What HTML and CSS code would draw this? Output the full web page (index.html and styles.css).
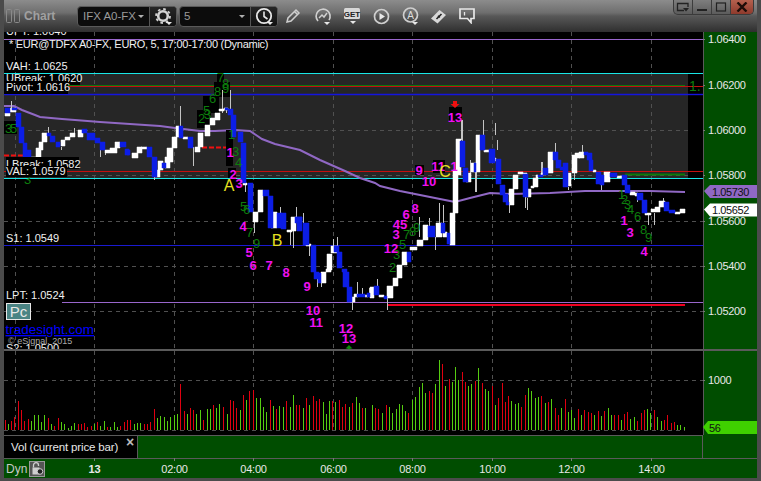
FILE: index.html
```html
<!DOCTYPE html>
<html lang="en">
<head>
<meta charset="utf-8">
<title>Chart</title>
<link rel="stylesheet" href="styles.css">
</head>
<body>
<div class="window">
  <header class="titlebar">
    <div class="brand">
      <svg class="brand-icon" width="15" height="15" viewBox="0 0 15 15"><rect x="0.5" y="0.5" width="5" height="13" rx="1"/><rect x="8.5" y="0.5" width="5" height="13" rx="1"/></svg>
      <span class="brand-name">Chart</span>
    </div>
    <div class="combo combo-symbol">
      <span class="combo-text">IFX A0-FX</span><span class="caret"></span>
      <span class="combo-btn">
        <svg width="18" height="18" viewBox="0 0 18 18"><circle class="ic-s" cx="9" cy="9" r="4.8" stroke-width="2.6"/><circle class="ic-s" cx="9" cy="9" r="7" stroke-width="1.8" stroke-dasharray="2.6 2.9"/><path class="ic-f" d="M12 15h6l-3 3z"/></svg>
      </span>
    </div>
    <div class="combo combo-interval">
      <span class="combo-text">5</span><span class="caret"></span>
      <span class="combo-btn">
        <svg width="18" height="18" viewBox="0 0 18 18"><circle class="ic-w" cx="9" cy="9" r="7.2" stroke-width="1.8"/><path class="ic-w" d="M9 4.5V9.5L12.5 12" stroke-width="1.6"/><path class="ic-f" d="M12 15h6l-3 3z"/></svg>
      </span>
    </div>
    <div class="tools">
      <svg class="tool t-pencil" width="16" height="16" viewBox="0 0 16 16"><path class="ic-g" d="M2 14l1-4 8-8 3 3-8 8zM9.500 3.500l3 3" stroke-width="1.5"/></svg>
      <svg class="tool t-chart" width="18" height="18" viewBox="0 0 18 18"><path class="ic-g" d="M4 14A7 7 0 1 1 15 13" stroke-width="1.7"/><path class="ic-g" d="M5 11l3-3 2 2 3-4" stroke-width="1.5"/><path class="ic-f" d="M10 15h6l-3 3z"/></svg>
      <svg class="tool t-get" width="18" height="18" viewBox="0 0 18 18"><rect class="get-box" x="0" y="1" width="16" height="11" rx="1.500"/><text class="get-text" x="8" y="9.500">GET</text><path class="ic-f" d="M6 14h6l-3 3z"/></svg>
      <svg class="tool t-play" width="17" height="17" viewBox="0 0 17 17"><circle class="ic-g" cx="8.500" cy="8.500" r="7" stroke-width="1.7"/><path class="ic-f" d="M6.500 5l5.500 3.500-5.500 3.500z"/></svg>
      <svg class="tool t-auto" width="18" height="18" viewBox="0 0 18 18"><circle class="ic-g" cx="8.500" cy="8" r="7" stroke-width="1.7"/><text class="auto-text" x="8.500" y="11.500">A</text><path class="ic-f" d="M10 15h6l-3 3z"/></svg>
      <svg class="tool t-diamond" width="17" height="15" viewBox="0 0 17 15"><path class="ic-sf" d="M1 9.500L9.500 1 16 6 7.500 14.500z"/><path class="ic-d" d="M6.500 10l5-5M9.800 8.500l-1.800-1.800" stroke-width="1.600"/></svg>
      <svg class="tool t-note" width="17" height="16" viewBox="0 0 17 16"><path class="ic-w" d="M1 1h14v9.500h-3v4l-3.500-4H1z" stroke-width="1.700"/><path class="ic-w" d="M5.500 4v3.500" stroke-width="1.300"/></svg>
    </div>
    <div class="winctl">
      <span class="wbtn"><svg width="14" height="11" viewBox="0 0 14 11"><path class="ic-w2" d="M8 8.500H1.500V1.500H12V5" stroke-width="1.300"/><path class="ic-f2" d="M7 6h6l-3 3.500z"/></svg></span>
      <span class="wbtn"><svg width="12" height="10" viewBox="0 0 12 10"><path class="ic-f2" d="M1 7h10v2H1z"/></svg></span>
      <span class="wbtn"><svg width="12" height="10" viewBox="0 0 12 10"><rect class="ic-w2" x="1.500" y="1" width="9" height="8" stroke-width="1.200"/></svg></span>
      <span class="wbtn wclose"><svg width="12" height="10" viewBox="0 0 12 10"><path class="ic-x" d="M1.500 0.500l9 9M10.500 0.500l-9 9" stroke-width="2.400"/></svg></span>
    </div>
  </header>

  <section class="pane-price">
    <svg class="plot" width="699" height="317" viewBox="4 32 699 317">
      <rect class="band" x="4" y="74" width="684" height="104"/>
      <path class="grid" d="M15 32V349M94 32V349M174 32V349M253 32V349M333 32V349M412 32V349M492 32V349M571 32V349M651 32V349M4 130H703M4 175H703M4 221H703M4 266H703M4 311H703"/>
      <path class="l-purple" d="M4 39.500H703"/>
      <path class="l-green" d="M4 85H685"/>
      <path class="l-red" d="M4 86H703M4 171.500H703"/>
      <path class="l-blue" d="M4 94.500H703"/>
      <path class="l-blue-thin" d="M4 245.500H703"/>
      <path class="l-purple" d="M62 302.500H703"/>
      <path class="l-thick-red" d="M388 305H685"/>
      <path class="l-thick-green" d="M625 174.500H685"/>
      <path class="l-dash-red" d="M4 155.500H26M202 147.500H228"/>
      <rect class="bg-black" x="688" y="74" width="15" height="104"/>
      <path class="l-cyan" d="M4 73.500H703M4 178.500H703"/>
      <path class="l-red" d="M685 86H703M688 171.500H703"/>
      <path class="l-blue" d="M688 94.500H703"/>
      <path class="ma" d="M4 106L14 106L22 110L35 115L40 117L62 119L75 120L100 122L130 124L160 126L175 128L200 131L215 131L235 130L250 131L262 139L275 144L300 150L320 160L345 171L360 178L375 183L380 186L400 191L430 197L450 201L455 202L470 198L490 193L510 194L550 193L585 191L650 191L685 192"/>

      <rect class="bg-black" x="4" y="121" width="13" height="13"/>
      <rect class="bg-black" x="197" y="110" width="14" height="18"/>
      <rect class="bg-black" x="203" y="96" width="16" height="17"/>
      <rect class="bg-black" x="214" y="82" width="16" height="15"/>
      <rect class="bg-black" x="217" y="74" width="7" height="9"/>
      <rect class="bg-black" x="226" y="130" width="7" height="36"/>
      <rect class="bg-black" x="228" y="168" width="8" height="10"/>
      <rect class="bg-black" x="449" y="107" width="13" height="15"/>
      <rect class="bg-black" x="415" y="165" width="9" height="10"/>
      <rect class="bg-black" x="433" y="160" width="12" height="13"/>

      <path class="wick" d="M11 101V108M48 127V133M74 128V134M61 147V150M100 150V157M105 150V155M193 147V166M154 172V180M180 106V126M222 90V113M230 90V113M226 108V113M462 120V141M476 172V192M483 120V135M439 203V225M443 205V223M419 217V237M429 218V226M435 237V250M470 160V173M475 172V192M525 197V208M541 162V175M548 162V170M555 143V153M582 145V153M542 162V173M663 198V201M648 215V225M654 213V225M637 195V202M509 205V213M527 198V210M280 207V213M290 232V245M293 227V248M296 207V217M303 213V223M309 245V256M333 239V247M337 237V246M317 279V287M321 283V287M352 302V310M357 282V295M362 288V295M369 288V295M377 279V287M387 298V310M243 166V180M245 183V192M254 222V233M461 120V140M495 123V135M497 140V150M574 170V180M568 187V190M601 184V190"/>

      <path class="body-w" d="M5 113h5v3h-5zM10 108h6v4h-6zM31 157h6v2h-6zM36 148h5v9h-5zM39 142h4v8h-4zM42 133h5v9h-5zM61 140h4v6h-4zM65 137h5v3h-5zM70 133h5v4h-5zM78 130h5v7h-5zM105 150h5v3h-5zM110 148h7v5h-7zM115 142h5v6h-5zM132 153h6v5h-6zM137 147h5v6h-5zM141 147h6v2h-6zM155 170h5v7h-5zM158 161h5v9h-5zM165 157h5v11h-5zM167 148h6v14h-6zM172 137h5v11h-5zM176 126h3v11h-3zM183 137h5v2h-5zM195 147h5v5h-5zM198 133h5v14h-5zM205 125h5v11h-5zM210 118h5v7h-5zM215 113h5v7h-5zM219 109h5v2h-5zM224 108h4v2h-4zM243 183h4v2h-4zM253 212h5v10h-5zM258 190h5v22h-5zM271 212h6v16h-6zM287 230h5v2h-5zM291 217h5v14h-5zM306 244h5v2h-5zM321 272h5v11h-5zM326 269h5v3h-5zM327 254h5v16h-5zM331 246h6v7h-6zM350 297h5v5h-5zM354 294h4v3h-4zM365 295h3v2h-3zM370 287h4v11h-4zM379 295h5v2h-5zM387 286h6v12h-6zM393 278h5v8h-5zM397 265h5v13h-5zM402 252h5v13h-5zM410 247h7v3h-7zM417 240h6v6h-6zM423 225h5v15h-5zM436 223h6v14h-6zM443 232h4v5h-4zM450 213h5v32h-5zM453 170h5v43h-5zM456 139h5v36h-5zM466 173h5v9h-5zM471 163h5v9h-5zM476 135h4v37h-4zM484 150h6v2h-6zM493 158h3v3h-3zM509 189h5v16h-5zM513 175h5v14h-5zM518 172h5v2h-5zM526 189h5v8h-5zM531 186h3v2h-3zM533 178h5v9h-5zM536 175h2v3h-2zM523 173h4v1h-4zM541 173h5v2h-5zM548 152h5v21h-5zM566 173h5v13h-5zM572 155h5v18h-5zM575 153h5v5h-5zM579 152h5v6h-5zM593 170h3v2h-3zM604 172h6v10h-6zM617 176h5v2h-5zM630 192h5v3h-5zM635 193h3v3h-3zM645 213h6v2h-6zM651 209h4v3h-4zM655 207h5v5h-5zM659 201h6v6h-6zM675 212h5v2h-5zM680 209h5v4h-5z"/>
      <path class="body-b" d="M5 108h5v5h-5zM12 108h5v2h-5zM16 113h5v14h-5zM19 127h5v16h-5zM23 143h4v14h-4zM27 150h4v8h-4zM47 133h4v3h-4zM50 136h5v6h-5zM56 142h4v5h-4zM82 129h5v4h-5zM87 133h8v7h-8zM95 138h5v5h-5zM100 142h5v8h-5zM120 142h6v5h-6zM125 149h4v6h-4zM127 150h3v5h-3zM147 147h5v10h-5zM152 157h5v20h-5zM162 163h4v5h-4zM179 126h4v12h-4zM188 137h5v11h-5zM225 108h3v2h-3zM228 109h5v6h-5zM231 115h5v22h-5zM238 132h5v10h-5zM241 143h5v40h-5zM248 183h5v29h-5zM263 190h6v6h-6zM268 196h5v32h-5zM277 213h5v15h-5zM281 213h5v16h-5zM295 217h7v6h-7zM297 217h5v14h-5zM303 223h6v22h-6zM311 245h5v27h-5zM314 272h5v7h-5zM318 273h3v10h-3zM334 246h5v6h-5zM337 252h5v16h-5zM342 269h5v3h-5zM343 272h6v15h-6zM347 287h5v15h-5zM357 294h8v3h-8zM367 293h3v4h-3zM374 286h5v9h-5zM384 296h3v3h-3zM407 252h4v10h-4zM428 226h7v11h-7zM441 223h4v10h-4zM447 233h3v11h-3zM460 141h5v26h-5zM463 168h5v14h-5zM474 163h2v9h-2zM480 135h5v15h-5zM489 149h6v14h-6zM496 159h5v25h-5zM500 185h5v10h-5zM503 194h5v8h-5zM506 202h3v3h-3zM523 174h5v23h-5zM538 175h5v2h-5zM543 168h5v7h-5zM553 152h5v8h-5zM556 160h5v8h-5zM560 167h3v3h-3zM563 163h5v24h-5zM584 152h4v3h-4zM587 153h5v7h-5zM589 160h4v11h-4zM596 172h5v12h-5zM600 175h4v10h-4zM610 173h7v4h-7zM622 175h5v10h-5zM625 185h5v8h-5zM637 193h6v7h-6zM642 200h5v13h-5zM664 202h5v9h-5zM669 210h6v3h-6z"/>

      <g class="green-digits">
        <text x="217" y="82">7</text><text x="222" y="88">8</text><text x="222" y="93">9</text><text x="214" y="96">8</text><text x="209" y="103">6</text><text x="203" y="115">5</text><text x="198" y="123">2</text><text x="204" y="119">3</text><text x="5" y="133">3</text><text x="10" y="133">5</text><text x="24" y="184">3</text><text x="232" y="156">3</text><text x="235" y="167">4</text><text x="228" y="139">1</text><text x="240" y="211">5</text><text x="243" y="214">6</text><text x="246" y="237">7</text><text x="253" y="248">9</text><text x="389" y="272">2</text><text x="393" y="259">3</text><text x="399" y="249">5</text><text x="403" y="239">7</text><text x="409" y="236">8</text><text x="413" y="232">9</text><text x="618" y="199">1</text><text x="621" y="204">2</text><text x="624" y="209">3</text><text x="627" y="214">4</text><text x="634" y="221">6</text><text x="640" y="234">8</text><text x="645" y="242">9</text>
        <text class="edge-digit" x="689" y="91">1.</text>
      </g>
      <g class="magenta-digits">
        <text x="455" y="122">13</text><text x="419" y="175">9</text><text x="429" y="186">10</text><text x="438" y="171">11</text><text x="454" y="171">1</text><text x="230" y="157">1</text><text x="233" y="179">2</text><text x="239" y="188">3</text><text x="243" y="231">4</text><text x="249" y="257">5</text><text x="253" y="270">6</text><text x="269" y="270">7</text><text x="286" y="277">8</text><text x="307" y="291">9</text><text x="313" y="315">10</text><text x="316" y="327">11</text><text x="346" y="333">12</text><text x="349" y="343">13</text><text x="391" y="253">12</text><text x="396" y="239">3</text><text x="400" y="229">45</text><text x="406" y="219">6</text><text x="415" y="213">8</text><text x="624" y="225">1</text><text x="630" y="237">3</text><text x="644" y="256">4</text>
      </g>
      <path class="arrow-red" d="M453 101h4v3h2.500l-4.500 4-4.500-4h2.500z"/>
      <path class="arrow-green" d="M349 345l3.500 3.500h-2v.5h-3v-.5h-2z"/>
      <text class="yellow" x="229" y="191">A</text>
      <text class="yellow" x="277" y="246">B</text>
      <text class="yellow" x="445" y="177">C</text>

      <g class="labels">
        <text x="6" y="35">UPT: 1.0640</text>
        <text class="title-line" x="9" y="48">* EUR@TDFX A0-FX, EURO, 5, 17:00-17:00 (Dynamic)</text>
        <text x="6" y="70">VAH: 1.0625</text>
        <rect class="bg-black" x="4" y="74" width="76" height="11"/>
        <text x="6" y="82">UBreak: 1.0620</text>
        <rect class="bg-black" x="4" y="81" width="64" height="13"/>
        <text x="6" y="91">Pivot: 1.0616</text>
        <rect class="bg-black" x="6" y="157" width="73" height="12"/>
        <text x="6" y="168">LBreak: 1.0582</text>
        <rect class="bg-black" x="6" y="166" width="61" height="11"/>
        <text x="6" y="175">VAL: 1.0579</text>
        <text x="6" y="242">S1: 1.0549</text>
        <text x="6" y="299">LPT: 1.0524</text>
        <text x="6" y="352">S2: 1.0500</text>
      </g>
      <rect class="pc-box" x="6.500" y="303.500" width="24" height="16"/>
      <text class="pc-text" x="18.500" y="316.500">Pc</text>
      <text class="link" x="5.500" y="334">tradesight.com</text>
      <text class="copy" x="8" y="344">© eSignal, 2015</text>
    </svg>
    <svg class="axis" width="54" height="317" viewBox="703 32 54 317">
      <path class="axis-line" d="M703.500 32V349"/>
      <path class="axis-tick" d="M703 39.500h2M703 85.500h2M703 130.500h2M703 175.500h2M703 221.500h2M703 266.500h2M703 311.500h2"/>
      <g class="axis-text">
        <text x="708" y="43">1.06400</text><text x="708" y="89">1.06200</text><text x="708" y="134">1.06000</text><text x="708" y="179">1.05800</text><text x="708" y="225">1.05600</text><text x="708" y="270">1.05400</text><text x="708" y="315">1.05200</text>
      </g>
      <path class="tag-purple" d="M704 191l6-6h47v13h-47z"/>
      <text class="tag-text" x="712" y="195.500">1.05730</text>
      <path class="tag-white" d="M704 209.500l6-6h47v13h-47z"/>
      <text class="tag-text" x="712" y="213.500">1.05652</text>
    </svg>
  </section>

  <div class="sep"></div>

  <section class="pane-vol">
    <svg class="plot" width="699" height="84" viewBox="4 351 699 84">
      <path class="grid" d="M15 351V431M94 351V431M174 351V431M253 351V431M333 351V431M412 351V431M492 351V431M571 351V431M651 351V431M4 380.500H703M4 430.500H685"/>
      <g transform="translate(0 360) scale(.33333)">
        <path class="vol-r" d="M16 180V211M34 183V211M45 172V211M55 123V211M64 150V211M75 183V211M85 178V211M145 175V211M164 198V211M175 174V211M235 192V211M244 193V211M254 189V211M263 200V211M274 198V211M292 186V211M322 201V211M363 198V211M373 187V211M383 181V211M393 181V211M433 192V211M442 192V211M451 186V211M463 147V211M541 72V211M553 153V211M572 144V211M581 150V211M610 180V211M640 135V211M670 141V211M691 120V211M700 123V211M711 144V211M731 105V211M750 93V211M760 90V211M811 120V211M829 147V211M859 123V211M889 135V211M899 135V211M919 114V211M940 108V211M949 123V211M958 117V211M999 123V211M1018 120V211M1028 141V211M1038 132V211M1058 129V211M1088 144V211M1128 144V211M1137 147V211"/>
        <path class="vol-g" d="M25 192V211M94 183V211M103 165V211M115 165V211M125 185V211M134 165V211M154 192V211M184 187V211M195 193V211M205 204V211M214 198V211M223 189V211M283 191V211M303 198V211M313 183V211M333 201V211M343 186V211M352 201V211M403 192V211M412 189V211M421 189V211M472 174V211M481 168V211M494 171V211M503 183V211M512 171V211M523 165V211M532 162V211M562 162V211M591 162V211M601 150V211M622 147V211M631 147V211M650 144V211M660 132V211M682 162V211M721 150V211M741 120V211M769 114V211M781 114V211M790 141V211M800 156V211M820 138V211M840 138V211M850 141V211M871 141V211M881 105V211M910 144V211M929 135V211M970 126V211M980 162V211M989 123V211M1008 126V211M1048 141V211M1069 111V211M1079 129V211M1098 144V211M1117 135V211"/>
      </g>
      <g transform="translate(380 360) scale(.33333)">
        <path class="vol-r" d="M19 135V211M87 159V211M148 93V211M157 99V211M187 12V211M208 57V211M247 36V211M256 66V211M286 63V211M307 69V211M337 78V211M355 114V211M367 69V211M376 126V211M385 108V211M424 141V211M436 105V211M484 108V211M505 126V211M526 144V211M535 165V211M556 117V211M595 147V211M614 150V211M626 156V211M634 159V211M655 153V211M674 153V211M704 165V211M715 165V211M734 162V211M743 156V211M772 183V211M784 159V211M793 150V211M823 150V211M853 180V211M862 165V211M875 189V211M883 186V211"/>
        <path class="vol-g" d="M7 159V211M28 141V211M38 159V211M49 147V211M58 132V211M68 135V211M77 153V211M98 120V211M107 111V211M118 81V211M128 69V211M137 99V211M167 72V211M179 0V211M196 78V211M217 66V211M226 21V211M236 60V211M265 78V211M276 72V211M296 24V211M316 87V211M326 93V211M346 135V211M395 123V211M406 132V211M415 129V211M445 84V211M454 93V211M466 114V211M475 111V211M496 129V211M514 117V211M544 144V211M565 156V211M574 150V211M584 174V211M604 165V211M643 165V211M664 168V211M685 144V211M694 165V211M724 180V211M753 177V211M763 171V211M802 147V211M813 159V211M832 171V211M844 183V211M892 195V211M902 195V211M913 201V211"/>
      </g>
    </svg>
    <svg class="axis" width="54" height="84" viewBox="703 351 54 84">
      <path class="axis-line" d="M703.500 351V435"/>
      <path class="axis-tick" d="M703 380.500h2"/>
      <text class="axis-text" x="708" y="384">1000</text>
      <path class="tag-green" d="M703 427l5-6h49v13h-49z"/>
      <text class="tag-text" x="709" y="431.500">56</text>
    </svg>
  </section>

  <section class="tabs">
    <div class="tab">
      <span class="tab-label">Vol (current price bar)</span>
      <span class="tab-close">×</span>
    </div>
    <div class="tab-fill"></div>
  </section>

  <footer class="timeline">
    <span class="dyn">Dyn</span>
    <span class="lock">
      <svg width="13" height="13" viewBox="0 0 13 13"><rect class="lock-body" x="1.500" y="5.500" width="7" height="7"/><path class="lock-arc" d="M2.500 5.500V3.200a2.500 2.500 0 0 1 5 0V4" stroke-width="1.300"/><circle class="lock-dot" cx="9" cy="9.500" r="2.800"/></svg>
    </span>
    <svg class="times" width="712" height="20" viewBox="46 458 712 20">
      <path class="axis-tick" d="M94.500 458v3M174.500 458v3M253.500 458v3M333.500 458v3M412.500 458v3M492.500 458v3M571.500 458v3M651.500 458v3"/>
      <g class="time-text">
        <text class="time-bold" x="94.500" y="473">13</text>
        <text x="174.500" y="473">02:00</text><text x="253.500" y="473">04:00</text><text x="333.500" y="473">06:00</text><text x="412.500" y="473">08:00</text><text x="492.500" y="473">10:00</text><text x="571.500" y="473">12:00</text><text x="651.500" y="473">14:00</text>
      </g>
    </svg>
  </footer>
</div>
</body>
</html>
```

FILE: styles.css
```css
* { box-sizing: border-box; }
html, body { margin: 0; padding: 0; background: #444; }
body { font-family: "Liberation Sans", Arial, sans-serif; }
svg { display: block; flex: none; }

.window {
  width: 761px; height: 481px; overflow: hidden;
  background: #4b4b4b;
  border-right: 4px solid #4b4b4b;
  border-left: 4px solid #4b4b4b;
  border-bottom: 3px solid #4b4b4b;
  display: flex; flex-direction: column;
}

/* title bar */
.titlebar {
  height: 32px; margin: 0 -4px; padding: 0 0 0 6px; flex: none;
  background: linear-gradient(#8c8c8c 0, #6e6e6e 40%, #585858 50%, #2f2f2f 100%);
  display: flex; align-items: center; position: relative;
}
.brand { display: flex; align-items: center; gap: 3px; width: 71px; }
.brand-icon rect { fill: none; stroke: #8a8a8a; }
.brand-name { font-size: 12px; font-weight: bold; color: #a0a0a0; }
.combo {
  height: 21px; display: flex; align-items: center; position: relative;
  background: #0c0c0c; border: 1px solid #5a5a5a; border-radius: 4px;
}
.combo-symbol { width: 100px; margin-right: 2px; }
.combo-interval { width: 99px; }
.combo-text { font-size: 11.5px; color: #9a9a9a; padding-left: 4px; flex: 1; white-space: nowrap; overflow: hidden; }
.combo-symbol .combo-text { padding-left: 5px; }
.caret { width: 0; height: 0; border: 3px solid transparent; border-top: 3px solid #b0b0b0; border-bottom: 0; margin-right: 5px; flex: none; }
.combo-btn {
  width: 27px; height: 19px; border-left: 1px solid #555; flex: none;
  display: flex; align-items: center; justify-content: center;
  background: linear-gradient(#262626, #111); border-radius: 0 3px 3px 0;
}
.tools { display: flex; align-items: center; }
.t-pencil { margin: 0 0 0 7px; }
.t-chart { margin-left: 13px; }
.t-get { margin-left: 12px; }
.t-play { margin-left: 11px; }
.t-auto { margin-left: 12px; }
.t-diamond { margin-left: 10px; }
.t-note { margin-left: 12px; }
.ic-w { fill: none; stroke: #e8e8e8; }
.ic-s { fill: none; stroke: #d4d4d4; }
.ic-g { fill: none; stroke: #cfcfcf; }
.ic-f { fill: #e8e8e8; }
.ic-sf { fill: #d8d8d8; }
.ic-d { fill: none; stroke: #222; }
.get-box { fill: #d8d8d8; }
.get-text { font: bold 8px "Liberation Sans", sans-serif; fill: #222; text-anchor: middle; }
.auto-text { font: 10px "Liberation Sans", sans-serif; fill: #ddd; text-anchor: middle; }

.winctl {
  position: absolute; top: 0; left: 673px; width: 81px; height: 15px;
  display: flex; border: 1px solid #3a3a3a; border-top: 0; border-radius: 0 0 5px 5px; overflow: hidden;
  background: linear-gradient(#7e7e7e, #5c5c5c);
}
.wbtn { flex: 1; display: flex; align-items: center; justify-content: center; border-left: 1px solid #3d3d3d; }
.wbtn:first-child { border-left: 0; }
.wclose { flex: 1.2; background: linear-gradient(#b4604e, #8e3a2c); }
.ic-w2 { fill: none; stroke: #222; }
.ic-f2 { fill: #222; }
.ic-x { fill: none; stroke: #1c0c08; }

/* panes */
.pane-price { display: flex; height: 317px; flex: none; background: #000; }
.pane-vol { display: flex; height: 84px; flex: none; background: #000; }
.sep { height: 2px; background: #5a5a5a; flex: none; }
.axis { background: #004d00; }
.axis-line { stroke: #5a5a5a; stroke-width: 1; }
.axis-tick { stroke: #777; stroke-width: 1; fill: none; }
.axis-text, .axis-text text { font: 11px "Liberation Sans", sans-serif; fill: #e8e8e8; letter-spacing: -.3px; }

.band { fill: #262626; }
.bg-black { fill: #000; }
.grid { stroke: #505050; stroke-width: 1; stroke-dasharray: 4 4; fill: none; shape-rendering: crispEdges; }
.l-purple { stroke: #9966cc; stroke-width: 1; fill: none; }
.l-cyan { stroke: #19e6e6; stroke-width: 1; fill: none; }
.l-green { stroke: #0b7a0b; stroke-width: 1; fill: none; shape-rendering: crispEdges; }
.l-red { stroke: #c41010; stroke-width: 1; fill: none; shape-rendering: crispEdges; }
.l-blue { stroke: #1414e0; stroke-width: 1.4; fill: none; }
.l-blue-thin { stroke: #1a1ad0; stroke-width: 1; fill: none; }
.l-thick-red { stroke: #f00020; stroke-width: 2; fill: none; }
.l-thick-green { stroke: #0a7a0a; stroke-width: 2; fill: none; }
.l-dash-red { stroke: #f01010; stroke-width: 2; stroke-dasharray: 5 2; fill: none; }
.ma { stroke: #9068c4; stroke-width: 2; fill: none; }
.wick { stroke: #c4c4c4; stroke-width: 1; fill: none; shape-rendering: crispEdges; }
.body-w { fill: #fff; stroke: #fff; stroke-width: .5; }
.body-b { fill: #0c1ee6; stroke: #0c1ee6; stroke-width: .5; }
.green-digits text { font: 13px "Liberation Sans", sans-serif; fill: #0d7d0d; }
.green-digits .edge-digit { font-size: 14px; }
.magenta-digits text { font: bold 13px "Liberation Sans", sans-serif; fill: #f010f0; text-anchor: middle; }
.arrow-red { fill: #f01010; }
.arrow-green { fill: #0a8a0a; }
.yellow { font: 16px "Liberation Sans", sans-serif; fill: #e6e020; text-anchor: middle; }
.labels text { font: 11px "Liberation Sans", sans-serif; fill: #f0f0f0; }
.labels .title-line { letter-spacing: -.27px; }
.pc-box { fill: #4a8484; stroke: #e8e8e8; stroke-width: 1; }
.pc-text { font: 15px "Liberation Sans", sans-serif; fill: #e8e8e8; text-anchor: middle; }
.link { font: 13.5px "Liberation Sans", sans-serif; fill: #0000ff; text-decoration: underline; }
.copy { font: 9px "Liberation Sans", sans-serif; fill: #a8a8a8; }
.tag-purple { fill: #9068c4; }
.tag-white { fill: #fff; }
.tag-green { fill: #3fd000; }
.tag-text { font: 11px "Liberation Sans", sans-serif; fill: #111; letter-spacing: -.4px; }
.vol-r { stroke: #e00010; stroke-width: 3; fill: none; shape-rendering: crispEdges; }
.vol-g { stroke: #55cc10; stroke-width: 3; fill: none; shape-rendering: crispEdges; }

/* tab strip */
.tabs { display: flex; height: 23px; flex: none; border-top: 1px solid #5a5a5a; background: #000; position: relative; }
.tab { width: 133px; flex: none; display: flex; align-items: flex-start; padding: 4px 0 0 7px; position: relative; background: #000; }
.tab-label { font-size: 11.5px; color: #e8e8e8; white-space: nowrap; margin-top: 1px; letter-spacing: -.15px; }
.tab-close { position: absolute; left: 122px; top: -2px; font-size: 14px; font-weight: bold; color: #bbb; }
.tab-fill { flex: 1; background: #004d00; border-left: 1px solid #5a5a5a; border-right: 1px solid #5a5a5a; margin-right: 54px; }
.tabs::after { content: ""; position: absolute; right: 0; top: -1px; bottom: 0; width: 54px; background: #004d00; }

/* time axis */
.timeline {
  height: 20px; flex: none; background: #004d00; border-top: 1px solid #5a5a5a;
  display: flex; align-items: center; padding-left: 2px; position: relative;
}
.dyn { font-size: 12px; color: #c8c8c8; width: 23px; flex: none; }
.lock { width: 16px; height: 16px; border: 1px solid #9a9a9a; background: #555; display: flex; align-items: center; justify-content: center; flex: none; }
.lock-body { fill: #cfcfcf; }
.lock-arc { fill: none; stroke: #cfcfcf; }
.lock-dot { fill: #222; stroke: #cfcfcf; stroke-width: 1; }
.times { margin-left: 1px; margin-top: -1px; }
.time-text text { font: 11px "Liberation Sans", sans-serif; fill: #e8e8e8; text-anchor: middle; letter-spacing: -.2px; }
.time-text .time-bold { font-weight: bold; }
```
